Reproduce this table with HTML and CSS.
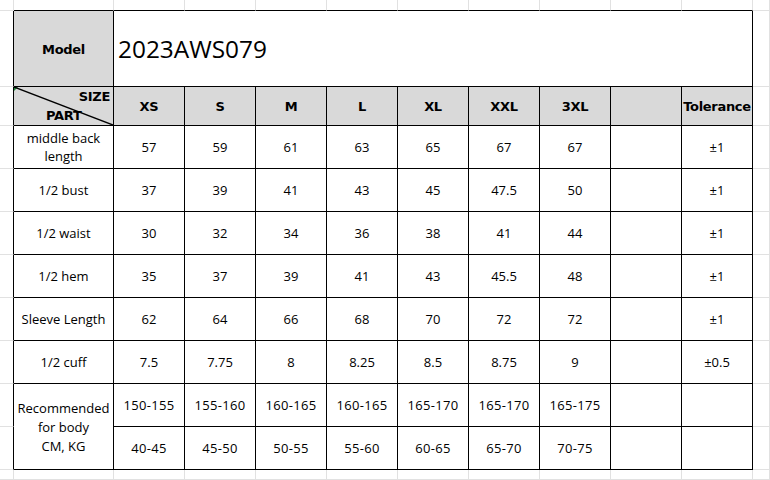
FILE: index.html
```html
<!DOCTYPE html>
<html>
<head>
<meta charset="utf-8">
<link rel="stylesheet" href="styles.css">
</head>
<body>
<div class="sheet">
  <!-- row 0 -->
  <div class="g"></div>
  <div class="g gb"></div><div class="g gb"></div><div class="g gb"></div><div class="g gb"></div><div class="g gb"></div>
  <div class="g gb"></div><div class="g gb"></div><div class="g gb"></div><div class="g gb"></div><div class="g gb"></div>
  <div class="g"></div>

  <!-- row 1 -->
  <div class="g gr"></div>
  <div class="c h">Model</div>
  <div class="c title">2023AWS079</div>
  <div class="g"></div>

  <!-- row 2 -->
  <div class="g gr"></div>
  <div class="c h corner">
    <span class="size">SIZE</span>
    <span class="part">PART</span>
    <svg class="diag" viewBox="0 0 99 38" preserveAspectRatio="none"><line x1="0" y1="0" x2="99" y2="38" stroke="#000" stroke-width="1.4"/></svg>
  </div>
  <div class="c h">XS</div><div class="c h">S</div><div class="c h">M</div><div class="c h">L</div>
  <div class="c h">XL</div><div class="c h">XXL</div><div class="c h">3XL</div><div class="c h"></div>
  <div class="c h">Tolerance</div>
  <div class="g"></div>

  <!-- row 3 -->
  <div class="g gr"></div>
  <div class="c lbl">middle back<br>length</div>
  <div class="c">57</div><div class="c">59</div><div class="c">61</div><div class="c">63</div>
  <div class="c">65</div><div class="c">67</div><div class="c">67</div><div class="c"></div><div class="c">±1</div>
  <div class="g"></div>

  <!-- row 4 -->
  <div class="g gr"></div>
  <div class="c lbl">1/2 bust</div>
  <div class="c">37</div><div class="c">39</div><div class="c">41</div><div class="c">43</div>
  <div class="c">45</div><div class="c">47.5</div><div class="c">50</div><div class="c"></div><div class="c">±1</div>
  <div class="g"></div>

  <!-- row 5 -->
  <div class="g gr"></div>
  <div class="c lbl">1/2 waist</div>
  <div class="c">30</div><div class="c">32</div><div class="c">34</div><div class="c">36</div>
  <div class="c">38</div><div class="c">41</div><div class="c">44</div><div class="c"></div><div class="c">±1</div>
  <div class="g"></div>

  <!-- row 6 -->
  <div class="g gr"></div>
  <div class="c lbl">1/2 hem</div>
  <div class="c">35</div><div class="c">37</div><div class="c">39</div><div class="c">41</div>
  <div class="c">43</div><div class="c">45.5</div><div class="c">48</div><div class="c"></div><div class="c">±1</div>
  <div class="g"></div>

  <!-- row 7 -->
  <div class="g gr"></div>
  <div class="c lbl">Sleeve Length</div>
  <div class="c">62</div><div class="c">64</div><div class="c">66</div><div class="c">68</div>
  <div class="c">70</div><div class="c">72</div><div class="c">72</div><div class="c"></div><div class="c">±1</div>
  <div class="g"></div>

  <!-- row 8 -->
  <div class="g gr"></div>
  <div class="c lbl">1/2 cuff</div>
  <div class="c">7.5</div><div class="c">7.75</div><div class="c">8</div><div class="c">8.25</div>
  <div class="c">8.5</div><div class="c">8.75</div><div class="c">9</div><div class="c"></div><div class="c">±0.5</div>
  <div class="g"></div>

  <!-- row 9 -->
  <div class="g gr"></div>
  <div class="c lbl rec">Recommended<br>for body<br>CM, KG</div>
  <div class="c rng">150-155</div><div class="c rng">155-160</div><div class="c rng">160-165</div><div class="c rng">160-165</div>
  <div class="c rng">165-170</div><div class="c rng">165-170</div><div class="c rng">165-175</div><div class="c"></div><div class="c"></div>
  <div class="g"></div>

  <!-- row 10 -->
  <div class="g gr"></div>
  <div class="c rng">40-45</div><div class="c rng">45-50</div><div class="c rng">50-55</div><div class="c rng">55-60</div>
  <div class="c rng">60-65</div><div class="c rng">65-70</div><div class="c rng">70-75</div><div class="c"></div><div class="c"></div>
  <div class="g"></div>

  <!-- row 11 -->
  <div class="g"></div><div class="g"></div><div class="g"></div><div class="g"></div><div class="g"></div><div class="g"></div>
  <div class="g"></div><div class="g"></div><div class="g"></div><div class="g"></div><div class="g"></div><div class="g"></div>
</div>
</body>
</html>
```
FILE: styles.css
```css
* { box-sizing: border-box; }
html, body { margin: 0; padding: 0; background: #fff; }
body { width: 770px; height: 480px; overflow: hidden; }

.sheet {
  display: grid;
  width: 770px;
  height: 480px;
  grid-template-columns: 14px 100px repeat(9, 71px) 1fr;
  grid-template-rows: 11px 76px 39px repeat(8, 43px) 1fr;
  font-family: "Open Sans", "Noto Sans", sans-serif;
  font-size: 13px;
  color: #000;
}

.g {
  border-right: 1px solid #e1e1e1;
  border-bottom: 1px solid #e1e1e1;
}
.g.gr { border-right-color: #000; }
.g.gb { border-bottom-color: #000; }

.c {
  border-right: 1px solid #000;
  border-bottom: 1px solid #000;
  display: flex;
  align-items: center;
  justify-content: center;
  text-align: center;
  white-space: nowrap;
  line-height: 18px;
}

.h {
  background: #d9d9d9;
  font-family: "DejaVu Sans", Verdana, sans-serif;
  font-weight: bold;
  letter-spacing: -0.3px;
  padding-top: 2px;
}

.title {
  grid-column: span 9;
  justify-content: flex-start;
  padding-left: 4px;
  font-size: 24.4px;
  line-height: 32px;
}

.lbl { line-height: 18px; }
.rec { grid-row: span 2; line-height: 19px; padding-top: 1px; }
.rng { letter-spacing: 0.3px; }

.corner {
  position: relative;
  flex-direction: column;
  align-items: stretch;
  justify-content: flex-start;
  padding-top: 0;
  line-height: 19px;
}
.corner::before {
  content: "";
  position: absolute;
  top: 0;
  left: 0;
  border-top: 4px solid #1f8a3b;
  border-right: 4px solid transparent;
}
.corner .size { align-self: flex-end; padding-right: 3px; }
.corner .part { align-self: flex-start; padding-left: 32px; }
.corner .diag {
  position: absolute;
  top: 0;
  left: 0;
  width: 99px;
  height: 38px;
}
```
